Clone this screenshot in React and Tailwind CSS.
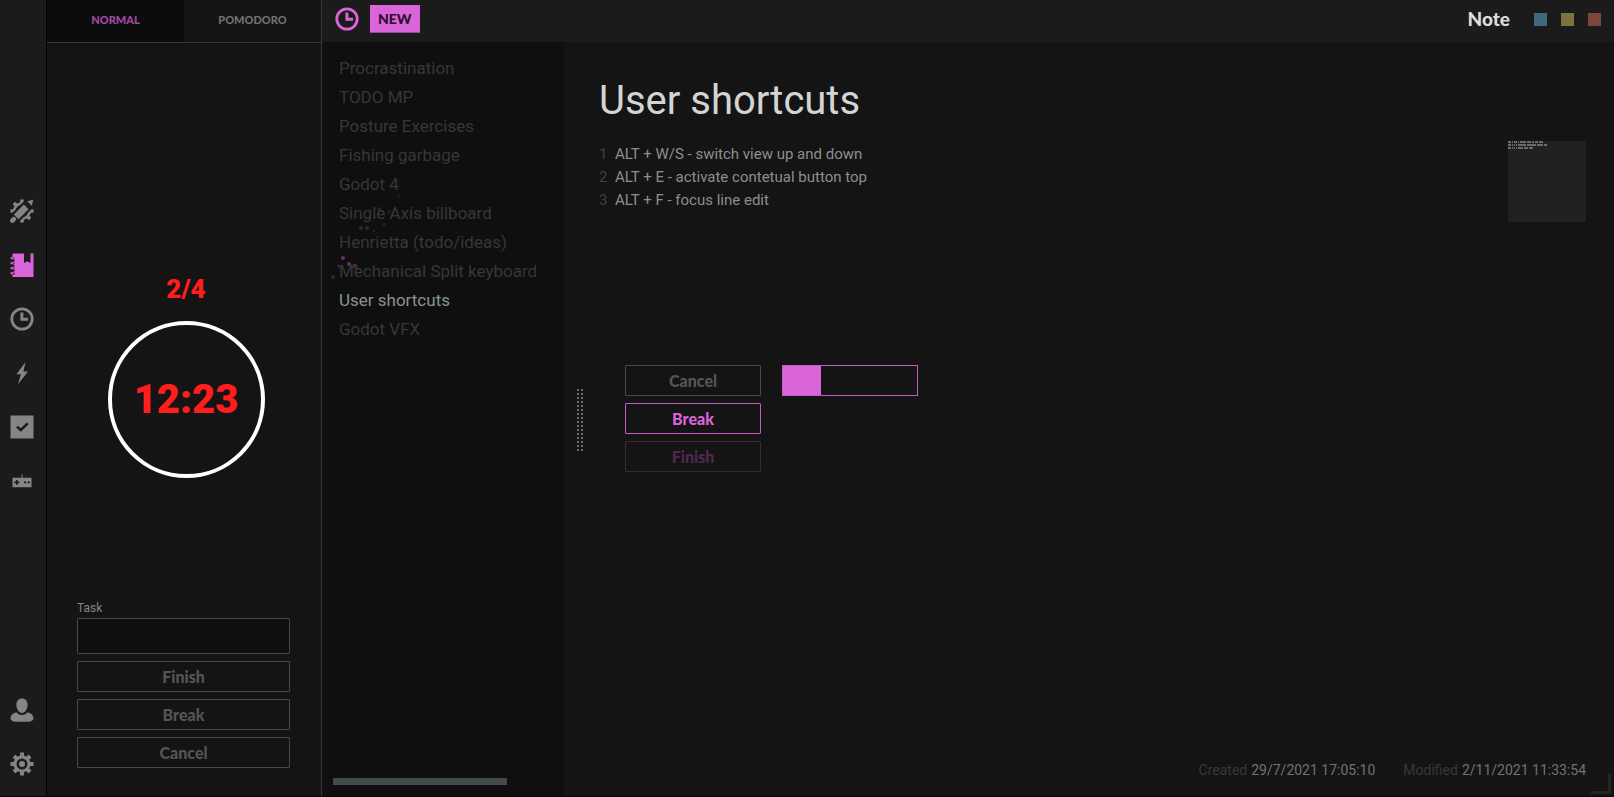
import React from "react";

const DISPLAY = "font-['Lato',sans-serif] font-black";

function SketchIcon() {
  return (
    <svg viewBox="0 0 24 24" className="size-6" aria-hidden="true">
      <path d="M12 .5v4M12 19.500v4M.5 12h4M19.500 12h4M3.900 3.900l3 3M17.100 17.100l3 3" stroke="currentColor" strokeWidth="3.600" />
      <circle cx="12" cy="12" r="7.600" fill="none" stroke="currentColor" strokeWidth="2.800" />
      <path d="M0 24 24 0" stroke="#1b1b1b" strokeWidth="11" />
      <path d="M6.200 17.800 16.200 7.800" stroke="currentColor" strokeWidth="6.600" />
      <path d="M17.200 2.200 23.200.8 21.800 6.800z" fill="currentColor" />
      <path d="M2.400 21.600 3.800 20.200" stroke="currentColor" strokeWidth="4.600" strokeLinecap="round" />
    </svg>
  );
}

function NotebookIcon() {
  return (
    <svg viewBox="0 0 24 24" className="size-6" fill="currentColor" aria-hidden="true">
      <path d="M2.500.5H14v9.500l3.200-1.800 3.300 1.800V.5h3V24H2.500v-2.500H5v-1H2.500V.5z" />
      <path d="M.5 4.200h3.500v2H.5zM.5 9.200h3.500v2H.5zM.5 14.200h3.500v2H.5zM.5 19.200h3.500v2H.5z" />
      <path d="M0 7.700h3.600M0 12.700h3.600M0 17.700h3.600" stroke="#1b1b1b" strokeWidth="2.200" strokeLinecap="round" />
      <path d="M2.800 5.200h2M2.800 10.200h2M2.800 15.200h2M2.800 20.200h2" stroke="#1b1b1b" strokeWidth=".8" />
    </svg>
  );
}

function ClockIcon() {
  return (
    <svg viewBox="0 0 24 24" className="size-6" fill="none" stroke="currentColor" strokeWidth="2.800" aria-hidden="true">
      <circle cx="12" cy="12" r="10.200" />
      <path d="M11.900 5.600v6.600h6.200" strokeWidth="3" />
    </svg>
  );
}

function BoltIcon() {
  return (
    <svg viewBox="0 0 24 24" className="size-6" fill="currentColor" aria-hidden="true">
      <path d="M15.500 1 6.500 13.200h4.400L8 23.200l10-12.600h-4.600z" />
    </svg>
  );
}

function CheckIcon() {
  return (
    <svg viewBox="0 0 24 24" className="size-6" aria-hidden="true">
      <path d="M.5.500h23v23H.5z" fill="currentColor" />
      <path d="m7 11.600 3.800 3.400 7-6.600" fill="none" stroke="#1b1b1b" strokeWidth="2.600" />
    </svg>
  );
}

function GamepadIcon() {
  return (
    <svg viewBox="0 0 24 24" className="size-6" aria-hidden="true">
      <path d="M2.500 8.800h9V5.500h1v3.300h9v9.400h-19z" fill="currentColor" />
      <path d="M6.800 11v4.800M4.400 13.400h4.800" stroke="#1b1b1b" strokeWidth="1.600" />
      <path d="M14 13.400h2.200M17.600 13.400h2.200" stroke="#1b1b1b" strokeWidth="1.800" />
    </svg>
  );
}

function UserIcon() {
  return (
    <svg viewBox="0 0 24 24" className="size-6" fill="currentColor" aria-hidden="true">
      <path d="M12 .5c3.600 0 5.600 2.600 5.600 6.600 0 3.800-2.600 8-5.600 8s-5.600-4.200-5.600-8c0-4 2-6.600 5.600-6.600z" />
      <path d="M6.300 14.300c1.500 1.800 3.500 2.800 5.700 2.800s4.200-1 5.700-2.800c3.400.8 5.800 3.400 5.800 6.200 0 2-2.500 3.200-5 3.200h-13c-2.500 0-5-1.200-5-3.200 0-2.800 2.400-5.400 5.800-6.200z" />
    </svg>
  );
}

function GearIcon() {
  return (
    <svg viewBox="0 0 24 24" className="size-6" aria-hidden="true">
      <g stroke="currentColor" strokeWidth="4">
        <path d="M12 .5v5M12 18.500v5M.5 12h5M18.500 12h5M4 4l3.500 3.500M16.500 16.500 20 20M4 20l3.500-3.500M16.500 7.500 20 4" />
      </g>
      <circle cx="12" cy="12" r="7" fill="none" stroke="currentColor" strokeWidth="3" />
      <circle cx="12" cy="12" r="3" fill="currentColor" />
    </svg>
  );
}

const topNav = [
  { label: "Sketch", Icon: SketchIcon },
  { label: "Notes", Icon: NotebookIcon, active: true },
  { label: "Timer", Icon: ClockIcon },
  { label: "Actions", Icon: BoltIcon },
  { label: "Tasks", Icon: CheckIcon },
  { label: "Games", Icon: GamepadIcon },
];

const bottomNav = [
  { label: "Profile", Icon: UserIcon },
  { label: "Settings", Icon: GearIcon },
];

function NavButton({ label, Icon, active }) {
  return (
    <button aria-label={label} className={active ? "text-[#da64da]" : "text-[#858585]"}>
      <Icon />
    </button>
  );
}

function Sidebar() {
  return (
    <nav className="flex w-[47px] shrink-0 flex-col items-center justify-between border-r border-black bg-[#1b1b1b] pt-[199px] pr-[3px] pb-5">
      <div className="flex flex-col gap-[30px]">
        {topNav.map((item) => <NavButton key={item.label} {...item} />)}
      </div>
      <div className="flex flex-col gap-[30px]">
        {bottomNav.map((item) => <NavButton key={item.label} {...item} />)}
      </div>
    </nav>
  );
}

const outline = {
  gray: "border-[#484848] text-[#555555]",
  pink: "border-[#c55cc5] text-[#da64da]",
  dim: "border-[#412341] text-[#4f284f]",
};

function OutlineButton({ tone = "gray", children }) {
  return (
    <button className={`${DISPLAY} h-[31px] w-full rounded-[1px] border text-base leading-none ${outline[tone]}`}>
      {children}
    </button>
  );
}

function TimerPanel() {
  return (
    <section className="flex w-[275px] shrink-0 flex-col border-r border-[#383838]">
      <div className={`${DISPLAY} flex h-[43px] border-b border-[#383838] text-[11px]`}>
        <button className="flex-1 bg-[#0c0c0c] pb-0.5 text-[#a349a3]">NORMAL</button>
        <button className="flex-1 pb-0.5 text-[#707070]">POMODORO</button>
      </div>
      <div className="flex grow flex-col items-center pt-[230px] pl-1 font-['Roboto',sans-serif] font-black text-[#ff1d1d]">
        <div className="text-[26px] leading-8">2/4</div>
        <div className="mt-4 flex size-[157px] items-center justify-center rounded-full border-4 border-white text-[40px] leading-none">
          12:23
        </div>
      </div>
      <div className="flex flex-col gap-[7px] pr-[31px] pb-7 pl-[30px]">
        <div className="flex flex-col">
          <label htmlFor="task" className="font-['Roboto',sans-serif] text-xs leading-5 text-[#858585]">Task</label>
          <input id="task" className="h-9 w-full rounded-[1px] border border-[#484848] bg-[#0f0f0f] px-2 text-sm text-[#a0a0a0]" />
        </div>
        <OutlineButton>Finish</OutlineButton>
        <OutlineButton>Break</OutlineButton>
        <OutlineButton>Cancel</OutlineButton>
      </div>
    </section>
  );
}

function TopBar() {
  return (
    <header className="flex h-[42px] shrink-0 items-center bg-[#1b1b1b] pr-[13px] pb-1 pl-[13px]">
      <button aria-label="History" className="text-[#da64da]"><ClockIcon /></button>
      <button className={`${DISPLAY} ml-[11px] h-7 border-b border-[#9a4c9a] bg-[#da64da] px-2 text-sm leading-none text-[#2a102a]`}>NEW</button>
      <h1 className={`${DISPLAY} mr-6 ml-auto text-[19px] leading-6 text-[#dcdcdc]`}>Note</h1>
      <div className="flex gap-3.5">
        <button aria-label="Minimize" className="size-[13px] bg-[#406a7b]" />
        <button aria-label="Maximize" className="size-[13px] bg-[#7c733f]" />
        <button aria-label="Close" className="size-[13px] bg-[#7d4540]" />
      </div>
    </header>
  );
}

const notes = [
  "Procrastination", "TODO MP", "Posture Exercises", "Fishing garbage", "Godot 4",
  "Single Axis billboard", "Henrietta (todo/ideas)", "Mechanical Split keyboard",
  "User shortcuts", "Godot VFX",
];

const sparks = [
  [77, 154, 2, 0.12], [57, 167, 2, 0.2], [67, 170, 2, 0.18], [39, 186, 2, 0.3], [45, 186, 2, 0.3],
  [52, 189, 1, 0.35], [62, 183, 2, 0.2], [21, 216, 2, 0.6], [27, 222, 2, 0.6], [33, 224, 2.5, 0.4],
  [17, 224, 1.5, 0.35], [11, 235, 2, 0.3], [5, 221, 1, 0.12],
];

function NoteList() {
  return (
    <aside className="relative flex w-[242px] shrink-0 flex-col justify-between bg-[#0f0f0f] pt-3">
      <ul className="pr-3 pl-[17px] font-['Roboto',sans-serif] text-[17px] leading-[29px]">
        {notes.map((note) => (
          <li key={note}>
            <button className={`block w-full overflow-hidden text-left whitespace-nowrap ${note === "User shortcuts" ? "text-[#899494]" : "text-[#343838]"}`}>
              {note}
            </button>
          </li>
        ))}
      </ul>
      <svg viewBox="0 0 100 250" className="pointer-events-none absolute top-0 left-0 h-[250px] w-[100px]" fill="#a040a8" aria-hidden="true">
        {sparks.map(([x, y, r, opacity]) => <circle key={`${x}-${y}`} cx={x} cy={y} r={r} opacity={opacity} />)}
      </svg>
      <div className="px-[11px] pb-[11px]">
        <div className="h-[7px] w-[174px] bg-[#444b4b]" />
      </div>
    </aside>
  );
}

const lines = [
  "ALT + W/S - switch view up and down",
  "ALT + E - activate contetual button top",
  "ALT + F - focus line edit",
];

const minimapRows = [
  [[0, 3], [4, 1], [6, 3], [10, 1], [12, 6], [19, 4], [24, 2], [27, 3], [31, 4]],
  [[0, 3], [4, 1], [6, 1], [8, 1], [10, 8], [19, 9], [29, 6], [36, 3]],
  [[0, 3], [4, 1], [6, 1], [8, 1], [10, 5], [16, 4], [21, 4]],
];

function Minimap() {
  return (
    <svg viewBox="0 0 78 81" className="mr-7 h-[81px] w-[78px] shrink-0 bg-[#212121]" aria-hidden="true">
      {minimapRows.map((row, i) =>
        row.map(([x, w]) => <path key={`${i}-${x}`} d={`M${x} ${i * 3 + 1}h${w}`} stroke="#6a6a6a" strokeWidth="2" />)
      )}
    </svg>
  );
}

function DragHandle() {
  return (
    <svg viewBox="0 0 8 64" className="h-16 w-2" stroke="#6d6d6d" strokeWidth="2" strokeDasharray="2 2" aria-hidden="true">
      <path d="M1 0v62M5 0v62" />
    </svg>
  );
}

function Stamp({ label, value }) {
  return (
    <div className="flex gap-1">
      <span className="text-[#363939]">{label}</span>
      <span className="text-[#6b7474]">{value}</span>
    </div>
  );
}

function Editor() {
  return (
    <main className="relative flex min-w-0 grow flex-col font-['Roboto',sans-serif]">
      <h2 className="pt-[35px] pl-[35px] text-[40px] leading-[48px] text-[#d4d4d4]">User shortcuts</h2>
      <div className="mt-4 flex h-[186px] items-start justify-between">
        <ol className="pt-[2px] pl-[35px] text-[15px] leading-[23px]">
          {lines.map((line, i) => (
            <li key={line} className="flex">
              <span className="w-4 text-[#404040]">{i + 1}</span>
              <span className="text-[#8e8e8e]">{line}</span>
            </li>
          ))}
        </ol>
        <Minimap />
      </div>
      <div className="mt-[38px] flex items-start pl-[13px]">
        <div className="pt-6"><DragHandle /></div>
        <div className="ml-10 flex w-[136px] flex-col gap-[7px]">
          <OutlineButton>Cancel</OutlineButton>
          <OutlineButton tone="pink">Break</OutlineButton>
          <OutlineButton tone="dim">Finish</OutlineButton>
        </div>
        <div role="progressbar" aria-label="Progress" aria-valuenow={28} className="ml-[21px] h-[31px] w-[136px] border border-[#c55cc5]">
          <div className="h-full w-[28%] bg-[#da64da]" />
        </div>
      </div>
      <footer className="mt-auto flex justify-end gap-7 pr-7 pb-4 text-sm leading-5">
        <Stamp label="Created" value="29/7/2021 17:05:10" />
        <Stamp label="Modified" value="2/11/2021 11:33:54" />
      </footer>
      <div className="absolute right-[3px] bottom-0.5 size-5 border-r-[3px] border-b-[3px] border-[#252525]" />
    </main>
  );
}

export default function App() {
  return (
    <div className="flex min-h-screen flex-col bg-[#141414]">
      <div className="flex grow">
        <Sidebar />
        <TimerPanel />
        <div className="flex min-w-0 grow flex-col">
          <TopBar />
          <div className="flex grow">
            <NoteList />
            <Editor />
          </div>
        </div>
      </div>
      <div className="h-px bg-[#0c080b]" />
    </div>
  );
}
